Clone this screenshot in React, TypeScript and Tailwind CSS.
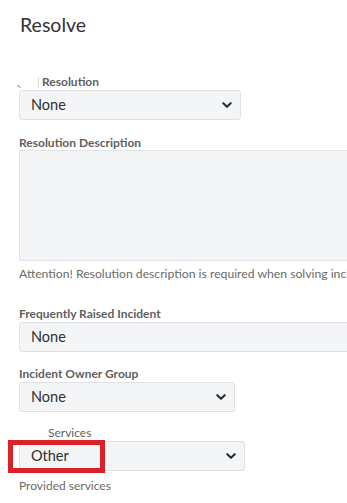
import React from 'react';

const Chevron: React.FC = () => (
  <svg width="10" height="6" viewBox="0 0 10 6" className="shrink-0">
    <path d="M1.3 1.2 L5 4.8 L8.7 1.2" fill="none" stroke="#2b2f36" strokeWidth="2.1" strokeLinecap="round" strokeLinejoin="round" />
  </svg>
);

const Label: React.FC<{ children: React.ReactNode; className?: string }> = ({ children, className = '' }) => (
  <div className={`text-[12px] leading-[14px] text-[#5f5f5f] ${className}`}>{children}</div>
);

const SelectBox: React.FC<{ value: string; width: string; chevron?: boolean }> = ({ value, width, chevron = true }) => (
  <div
    className={`${width} h-[30px] shrink-0 flex items-center justify-between pl-[11px] pr-[8px] bg-[#f4f5f7] border border-[#dfe1e5] rounded-[3px] text-[14.5px] text-[#2f2f2f]`}
  >
    <span>{value}</span>
    {chevron && <Chevron />}
  </div>
);

export default function App() {
  return (
    <div
      className="w-[347px] h-[503px] overflow-hidden bg-white pl-[19px]"
      style={{ fontFamily: 'Lato, "Open Sans", sans-serif' }}
    >
      <h1 className="pt-[13px] pl-[1px] text-[19.5px] leading-[24px] text-[#333]">Resolve</h1>

      {/* Resolution */}
      <div className="mt-[38px] h-[14px] flex items-center -ml-[2px]">
        <span className="w-[4px] h-[1px] mt-[8px] bg-[#9a9a9a] rotate-[30deg]" />
        <span className="ml-[17px] w-px h-[11px] bg-[#dcdcdc]" />
        <Label className="ml-[3px] font-bold">Resolution</Label>
      </div>
      <div className="mt-[1px]">
        <SelectBox value="None" width="w-[222px]" />
      </div>

      {/* Resolution Description */}
      <Label className="mt-[16px] font-bold">Resolution Description</Label>
      <div className="w-[360px] h-[111px] bg-[#f4f5f7] border border-[#e0e2e5] rounded-[2px]" />
      <div className="mt-[6px] text-[12.2px] leading-[14px] text-[#6a6a6a] whitespace-nowrap">
        Attention! Resolution description is required when solving incidents
      </div>

      {/* Frequently Raised Incident */}
      <Label className="mt-[26px] font-bold">Frequently Raised Incident</Label>
      <div className="mt-[1px]">
        <SelectBox value="None" width="w-[360px]" chevron={false} />
      </div>

      {/* Incident Owner Group */}
      <Label className="mt-[15px] font-bold">Incident Owner Group</Label>
      <div className="mt-[1px]">
        <SelectBox value="None" width="w-[216px]" />
      </div>

      {/* Services */}
      <Label className="mt-[14px] pl-[29px]">Services</Label>
      <div className="mt-[1px] relative w-[226px]">
        <SelectBox value="Other" width="w-[226px]" />
        <div className="absolute left-[-11px] top-[-1px] w-[97px] h-[33px] border-[5px] border-[#dc2128]" />
      </div>
      <div className="mt-[8px] text-[12px] leading-[14px] text-[#6a6a6a]">Provided services</div>
    </div>
  );
}
